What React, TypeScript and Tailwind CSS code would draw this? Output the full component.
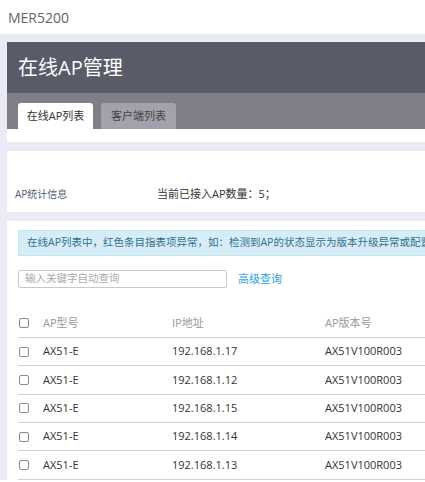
const font = { fontFamily: '"Open Sans", "Noto Sans CJK SC", sans-serif' };

interface ApRow {
  model: string;
  ip: string;
  version: string;
}

const rows: ApRow[] = [
  { model: 'AX51-E', ip: '192.168.1.17', version: 'AX51V100R003' },
  { model: 'AX51-E', ip: '192.168.1.12', version: 'AX51V100R003' },
  { model: 'AX51-E', ip: '192.168.1.15', version: 'AX51V100R003' },
  { model: 'AX51-E', ip: '192.168.1.14', version: 'AX51V100R003' },
  { model: 'AX51-E', ip: '192.168.1.13', version: 'AX51V100R003' },
];

function Checkbox() {
  return <span className="block h-[10px] w-[10px] rounded-[2px] border border-[#8a8a8a] bg-white" />;
}

export default function App() {
  return (
    <div className="h-[482px] w-[425px] overflow-hidden bg-white" style={font}>
      <div className="flex h-[34px] items-center pl-2 text-[14px] text-[#666]">MER5200</div>

      <div className="w-[700px] bg-[#ebebf6] pl-[7px] pt-[8px]">
        {/* page header */}
        <div className="flex h-[51px] items-center bg-[#595b68] pl-[11px] text-[20px] text-white">
          在线AP管理
        </div>
        <div className="flex h-[36px] items-end gap-[8px] bg-[#807e89] pl-[11px]">
          <div className="flex h-[26px] w-[75px] items-center justify-center rounded-t-[3px] bg-white text-[11px] text-[#333]">
            在线AP列表
          </div>
          <div className="flex h-[26px] w-[75px] items-center justify-center rounded-t-[3px] bg-[#a3a1ab] text-[11px] text-[#444]">
            客户端列表
          </div>
        </div>
        <div className="h-[13px] bg-white" />

        {/* stats */}
        <div className="mt-[9px] flex h-[61px] items-end bg-white pb-[10px]">
          <span className="w-[150px] pl-[8px] text-[10px] text-[#4f5e6e]">AP统计信息</span>
          <span className="text-[11px] text-[#333]">当前已接入AP数量：5；</span>
        </div>

        {/* list */}
        <div className="mt-[9px] bg-white pl-[11px] pt-[9px]">
          <div className="flex h-[26px] items-center whitespace-nowrap border border-[#bce8f1] bg-[#d6edf7] pl-[8px] text-[10.5px] text-[#31708f]">
            在线AP列表中，红色条目指表项异常，如：检测到AP的状态显示为版本升级异常或配置下发失败，请及时处理。
          </div>

          <div className="mt-[14px] flex items-center gap-[11px]">
            <div className="flex h-[18px] w-[209px] items-center rounded-[2px] border border-[#c8c8c8] pl-[6px] text-[10.5px] text-[#aaa]">
              输入关键字自动查询
            </div>
            <span className="text-[11px] text-[#2fa4d9]">高级查询</span>
          </div>

          <div className="mt-[21px]">
            <div className="flex h-[29px] items-center border-b border-[#d2d2d2] text-[11px] text-[#999]">
              <div className="flex w-[25px] pl-[1px]">
                <Checkbox />
              </div>
              <div className="w-[129px]">AP型号</div>
              <div className="w-[153px]">IP地址</div>
              <div>AP版本号</div>
            </div>
            {rows.map((row) => (
              <div
                key={row.ip}
                className="flex h-[28.33px] items-center border-b border-[#d2d2d2] text-[11px] text-[#333]"
              >
                <div className="flex w-[25px] pl-[1px]">
                  <Checkbox />
                </div>
                <div className="w-[129px]">{row.model}</div>
                <div className="w-[153px]">{row.ip}</div>
                <div>{row.version}</div>
              </div>
            ))}
          </div>
        </div>
      </div>
    </div>
  );
}
